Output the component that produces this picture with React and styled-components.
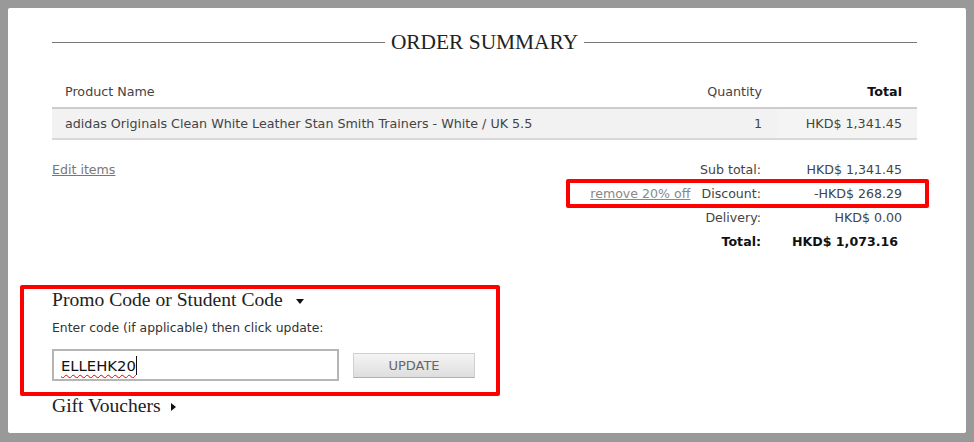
import React from "react";
import styled, { createGlobalStyle } from "styled-components";

const GlobalStyle = createGlobalStyle`
  html, body {
    margin: 0;
    padding: 0;
    background: #999999;
  }
  body {
    padding: 8px 8px 9px 8px;
    font-family: "DejaVu Sans", Verdana, sans-serif;
  }
`
const Panel = styled.div`
  width: 958px;
  height: 425px;
  background: #ffffff;
  border-radius: 2px;
  padding: 22px 49px 0 44px;
  box-sizing: border-box;
  overflow: hidden;
`
const TitleRow = styled.div`
  display: flex;
  align-items: center;
  height: 24px;
`
const TitleLine = styled.div`
  flex: 1;
  height: 1px;
  background: #777777;
`
const Title = styled.h2`
  margin: 0 6px;
  font-family: "Liberation Serif", "Times New Roman", serif;
  font-weight: normal;
  font-size: 21.4px;
  line-height: 24px;
  color: #222222;
`
const Table = styled.div`
  margin-top: 21px;
  font-size: 12.7px;
  color: #333333;
`
const Row = styled.div`
  display: grid;
  grid-template-columns: 1fr 120px 140px;
  height: ${props => (props.head ? "32px" : "29px")};
  align-items: center;
  background: ${props => (props.head ? "#ffffff" : "#f2f2f2")};
  border-bottom: 2px solid ${props => (props.head ? "#cccccc" : "#d8d8d8")};
`
const Cell = styled.div`
  padding: 0 ${props => (props.right ? "15px" : "13px")};
  padding-top: ${props => (props.head ? "1px" : "0")};
  font-weight: ${props => (props.bold ? "bold" : "normal")};
  color: ${props => (props.bold ? "#111111" : "#444444")};
  height: 100%;
  box-sizing: border-box;
  display: flex;
  align-items: center;
  justify-content: ${props => (props.right ? "flex-end" : "flex-start")};
  background: ${props => (props.shade ? "#f4f4f4" : "transparent")};
`
const Summary = styled.div`
  display: flex;
  justify-content: space-between;
  margin-top: 18px;
  font-size: 12.6px;
`
const EditLink = styled.a`
  color: #777777;
  text-decoration: underline;
  line-height: 24px;
  height: 24px;
  cursor: pointer;
`
const Totals = styled.div`
  display: flex;
  flex-direction: column;
`
const TotalRow = styled.div`
  position: relative;
  display: flex;
  align-items: center;
  justify-content: flex-end;
  height: ${props => (props.last ? "24px" : "23.7px")};
  color: ${props => (props.bold ? "#111111" : "#444444")};
  font-weight: ${props => (props.bold ? "bold" : "normal")};

  ${props => props.marked && `
    &::after {
      content: "";
      position: absolute;
      left: -24px;
      right: -12px;
      top: -3px;
      bottom: -3px;
      border: 4px solid #ff0000;
      border-radius: 2px;
    }
  `}
`
const Remove = styled.a`
  color: #888888;
  text-decoration: underline;
  margin-right: 11px;
`
const Label = styled.span`
  margin-right: 15px;
  text-align: right;
`
const Value = styled.span`
  width: 141px;
  text-align: right;
  padding-right: ${props => (props.bold ? "19px" : "15px")};
  box-sizing: border-box;
`
const PromoBox = styled.div`
  margin: 32px 0 0 -32px;
  width: 480px;
  height: 111px;
  border: 4px solid #ff0000;
  border-radius: 2px;
  box-sizing: border-box;
  padding-left: 28px;
`
const Heading = styled.div`
  font-family: "Liberation Serif", "Times New Roman", serif;
  font-size: 19.6px;
  line-height: 22px;
  color: #222222;
  display: flex;
  align-items: center;
`
const Caret = styled.span`
  display: inline-block;
  width: 0;
  height: 0;
  margin-left: ${props => (props.open ? "13px" : "10px")};
  border-left: ${props => (props.open ? "4px solid transparent" : "5px solid #111")};
  border-right: ${props => (props.open ? "4px solid transparent" : "0")};
  border-top: ${props => (props.open ? "5px solid #111" : "4px solid transparent")};
  border-bottom: ${props => (props.open ? "0" : "4px solid transparent")};
  margin-top: ${props => (props.open ? "2px" : "1px")};
`
const Hint = styled.div`
  margin-top: 9px;
  font-size: 12.4px;
  line-height: 16px;
  color: #333333;
`
const Form = styled.div`
  display: flex;
  align-items: center;
  margin-top: 13px;
`
const CodeField = styled.div`
  width: 287px;
  height: 32px;
  box-sizing: border-box;
  border: 2px solid #b5b5b5;
  display: flex;
  align-items: center;
  padding-left: 7px;
  font-size: 14.8px;
  color: #111111;
`
const Typed = styled.span`
  text-decoration: underline wavy #e00000;
  text-decoration-thickness: 1px;
  text-underline-offset: 3px;
`
const CaretBar = styled.span`
  width: 1px;
  height: 19px;
  background: #111111;
`
const UpdateButton = styled.button`
  margin-left: 14px;
  width: 122px;
  height: 25px;
  border: 1px solid #d0d0d0;
  border-bottom-color: #b0b0b0;
  background: linear-gradient(#f4f4f4, #dedede);
  font-family: "DejaVu Sans", Verdana, sans-serif;
  font-size: 13px;
  color: #666666;
  padding: 0;
`
const GiftHeading = styled(Heading)`
  line-height: 20px;
`

const rows = [
  { label: "Sub total:", value: "HKD$ 1,341.45" },
  { label: "Discount:", value: "-HKD$ 268.29", remove: "remove 20% off" },
  { label: "Delivery:", value: "HKD$ 0.00" },
  { label: "Total:", value: "HKD$ 1,073.16", bold: true }
]

const App = () => {
  return (
    <>
      <GlobalStyle />
      <Panel>
        <TitleRow>
          <TitleLine />
          <Title>ORDER SUMMARY</Title>
          <TitleLine />
        </TitleRow>

        <Table>
          <Row head>
            <Cell head>Product Name</Cell>
            <Cell head right>Quantity</Cell>
            <Cell head right bold>Total</Cell>
          </Row>
          <Row>
            <Cell>adidas Originals Clean White Leather Stan Smith Trainers - White / UK 5.5</Cell>
            <Cell right>1</Cell>
            <Cell right shade>HKD$ 1,341.45</Cell>
          </Row>
        </Table>

        <Summary>
          <EditLink>Edit items</EditLink>
          <Totals>
            {rows.map(row => (
              <TotalRow key={row.label} bold={row.bold} marked={!!row.remove} last={row.bold}>
                {row.remove && <Remove>{row.remove}</Remove>}
                <Label>{row.label}</Label>
                <Value bold={row.bold}>{row.value}</Value>
              </TotalRow>
            ))}
          </Totals>
        </Summary>

        <PromoBox>
          <Heading>
            Promo Code or Student Code
            <Caret open />
          </Heading>
          <Hint>Enter code (if applicable) then click update:</Hint>
          <Form>
            <CodeField>
              <Typed>ELLEHK20</Typed>
              <CaretBar />
            </CodeField>
            <UpdateButton>UPDATE</UpdateButton>
          </Form>
        </PromoBox>
        <GiftHeading>
          Gift Vouchers
          <Caret />
        </GiftHeading>
      </Panel>
    </>
  );
};

export default App;
